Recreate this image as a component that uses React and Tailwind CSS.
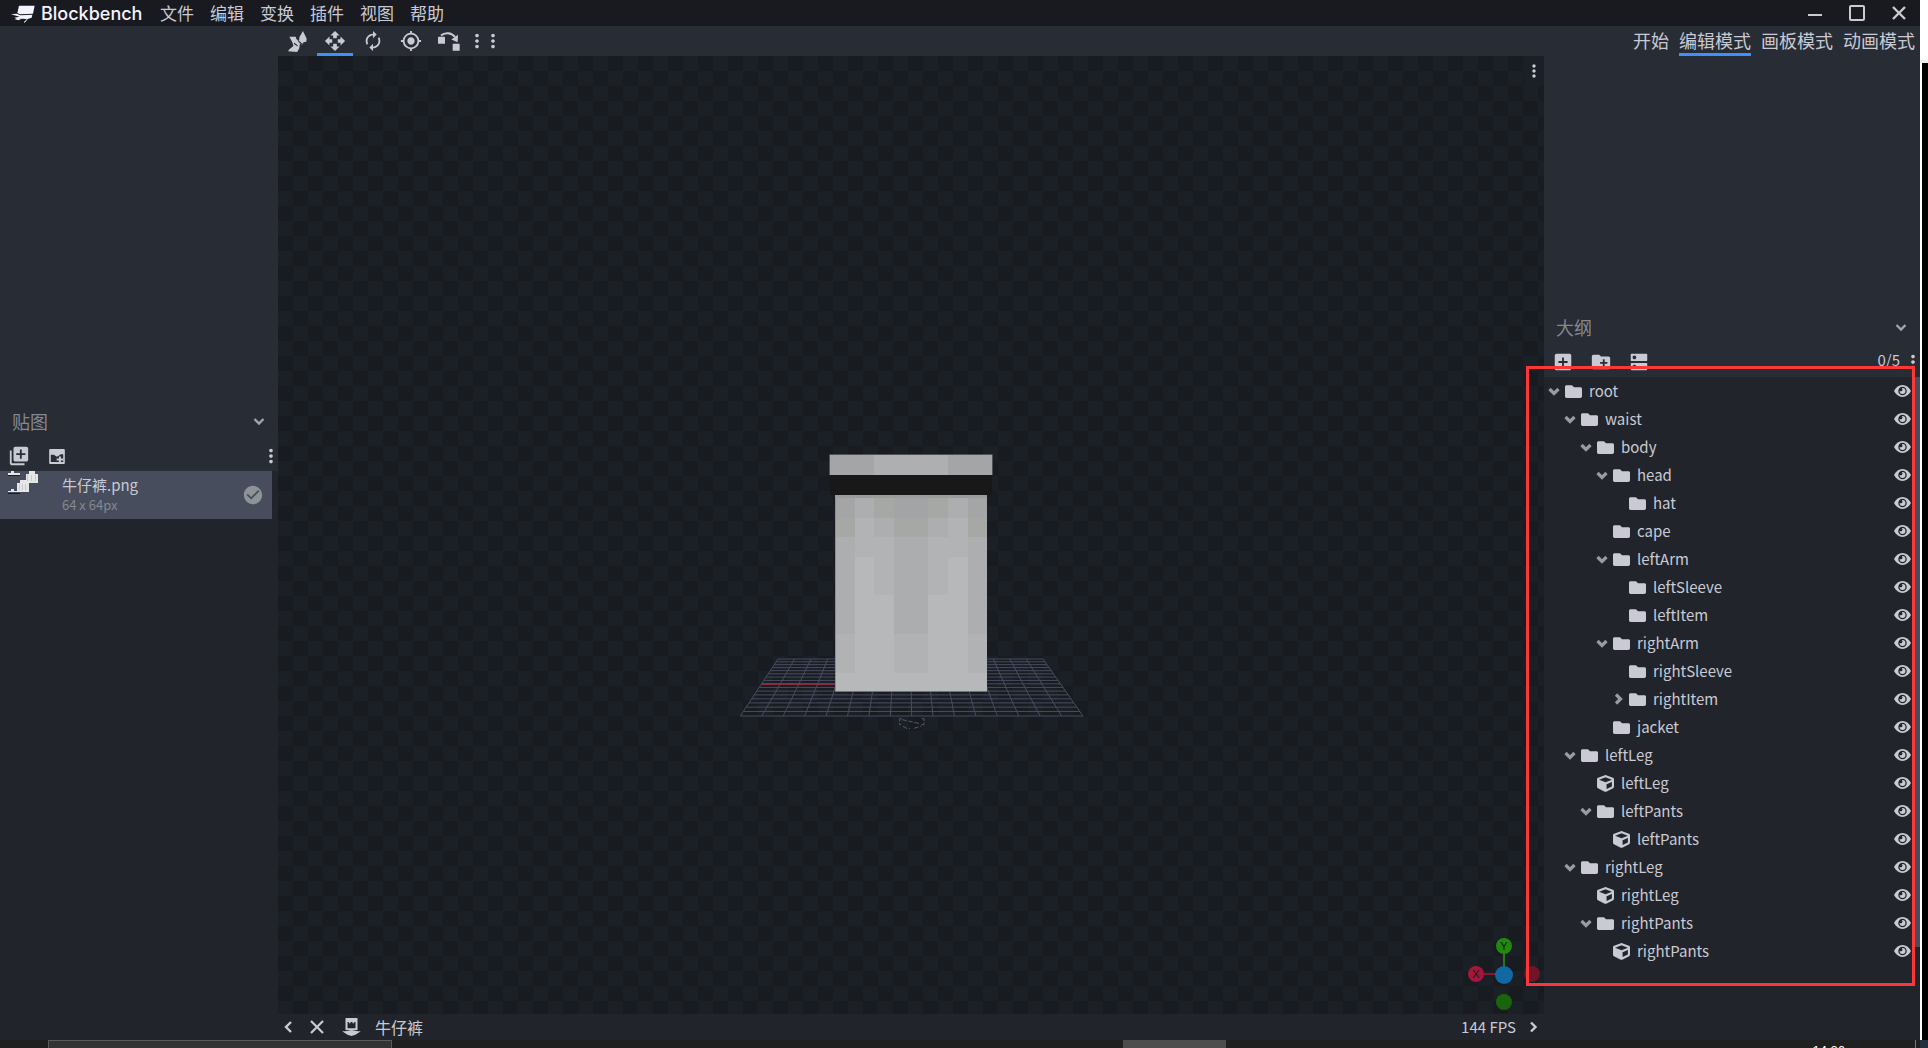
import React from "react";
import {
  MdAutorenew, MdMyLocation, MdMoreVert, MdLibraryAdd, MdCheckCircle, MdAddBox,
  MdCreateNewFolder, MdDns, MdOpenWith,
} from "react-icons/md";
import { FaFolder, FaCube } from "react-icons/fa";

const menus = ["文件", "编辑", "变换", "插件", "视图", "帮助"];
const modes = ["开始", "编辑模式", "画板模式", "动画模式"];

// [name, depth, kind, arrow]
const nodes = [
  ["root", 0, "folder", "down"],
  ["waist", 1, "folder", "down"],
  ["body", 2, "folder", "down"],
  ["head", 3, "folder", "down"],
  ["hat", 4, "folder", ""],
  ["cape", 3, "folder", ""],
  ["leftArm", 3, "folder", "down"],
  ["leftSleeve", 4, "folder", ""],
  ["leftItem", 4, "folder", ""],
  ["rightArm", 3, "folder", "down"],
  ["rightSleeve", 4, "folder", ""],
  ["rightItem", 4, "folder", "right"],
  ["jacket", 3, "folder", ""],
  ["leftLeg", 1, "folder", "down"],
  ["leftLeg", 2, "cube", ""],
  ["leftPants", 2, "folder", "down"],
  ["leftPants", 3, "cube", ""],
  ["rightLeg", 1, "folder", "down"],
  ["rightLeg", 2, "cube", ""],
  ["rightPants", 2, "folder", "down"],
  ["rightPants", 3, "cube", ""],
];

const indents = ["pl-0", "pl-4", "pl-8", "pl-12", "pl-16"];

function Chevron({ dir = "down", className = "", weight = 2.4 }) {
  const d = {
    down: "M1.5 4 L6 8.5 L10.5 4",
    right: "M4 1.5 L8.5 6 L4 10.5",
    left: "M8 1 L3 6 L8 11",
  }[dir];
  return (
    <svg viewBox="0 0 12 12" className={"size-3 shrink-0 " + className} fill="none" stroke="currentColor" strokeWidth={weight} aria-hidden="true">
      <path d={d} />
    </svg>
  );
}

function EyeIcon() {
  return (
    <svg viewBox="0 0 52 36" className="h-3 w-[17px]" fill="currentColor" aria-hidden="true">
      <path fillRule="evenodd" d="M0 18 C6 7 15 0 26 0 C37 0 46 7 52 18 C46 29 37 36 26 36 C15 36 6 29 0 18 Z M26 5 A13 13 0 1 0 26 31 A13 13 0 1 0 26 5 Z" />
      <path d="M26 9 A9 9 0 1 1 17 18 Q22 20 25 17 Q27 13 24 9 Z" />
    </svg>
  );
}

function Logo() {
  return (
    <svg viewBox="0 0 72 54" className="h-[18px] w-6" fill="#f4f3ff" aria-hidden="true">
      <path d="M24 2 L71 2 L66 26 L27 28 L19 24 Z" />
      <path d="M0 28 L17 26 L28 31 L64 29 L62 38 L50 42 L46 48 L39 54 L39 50 L48 43 L36 41 L17 42 L10 38 L26 35 Z" />
      <path d="M10 42 L32 41 L22 46 Z" />
    </svg>
  );
}

function VertexSnapIcon() {
  return (
    <svg viewBox="0 0 56 62" className="h-[21px] w-[19px]" fill="currentColor" aria-hidden="true">
      <path d="M4 17 L22 17 L30 26 L36 32 L33 52 L29 58 L27 62 L0 60 L4 54 L16 44 L13 34 Z" />
      <path d="M44 0 L55 22 L54 32 L46 33 L40 42 L32 32 L34 18 Z" />
      <path d="M24 20 L32 28 M31 30 L42 40 M18 36 L28 44" stroke="#282c34" strokeWidth="3.5" fill="none" />
    </svg>
  );
}

function SnapIcon() {
  return (
    <svg viewBox="0 0 66 56" className="h-[19px] w-[22px]" fill="currentColor" aria-hidden="true">
      <rect x="0" y="14" width="21" height="21" rx="2" />
      <rect x="44" y="35" width="21" height="21" rx="2" />
      <path d="M9 10 C20 0 40 0 51 14" stroke="currentColor" strokeWidth="6" fill="none" />
      <path d="M60 8 L59 30 L40 22 Z" />
    </svg>
  );
}

function NewTextureIcon() {
  return (
    <svg viewBox="0 0 48 46" className="h-[15px] w-4" fill="currentColor" aria-hidden="true">
      <path fillRule="evenodd" d="M3 0 H45 Q48 0 48 3 V43 Q48 46 45 46 H3 Q0 46 0 43 V3 Q0 0 3 0 Z M5 18 V40 H43 V16 L36 16 L24 24 L14 18 Z" />
      <path d="M30 23 h6 v6 h7 v6 h-7 v7 h-6 v-7 h-7 v-6 h7 Z" />
    </svg>
  );
}

function TextureThumb() {
  return (
    <svg viewBox="0 0 90 70" className="h-[23px] w-[30px]" shapeRendering="crispEdges" aria-hidden="true">
      <g fill="#e6e6e6">
        <rect x="63" y="0" width="18" height="10" /><rect x="54" y="9" width="36" height="27" />
        <rect x="36" y="28" width="18" height="9" /><rect x="27" y="36" width="36" height="27" />
        <rect x="9" y="0" width="9" height="9" /><rect x="9" y="54" width="9" height="9" />
        <rect x="0" y="7" width="36" height="4" /><rect x="0" y="61" width="36" height="4" />
      </g>
      <path d="M0 13 H36 M0 67 H36" stroke="#181a1f" strokeWidth="3" />
      <path d="M60 12 V30 M72 12 V30 M82 12 V30 M33 39 V58 M44 39 V58 M54 39 V58" stroke="#c9cacc" strokeWidth="3" />
    </svg>
  );
}

function FileIcon() {
  return (
    <svg viewBox="0 0 56 54" className="h-[18px] w-[19px]" fill="currentColor" aria-hidden="true">
      <path fillRule="evenodd" d="M10 0 H46 V36 H10 Z M16 12 V31 H40 V12 H36 V16 H31 V12 H25 V16 H20 V12 Z" />
      <path d="M0 40 H8 L28 36 L48 40 H56 L40 50 L28 54 L16 50 Z" />
    </svg>
  );
}

const xs = [345, 405, 462, 522, 624, 684, 743, 801];
const outer = [[204, "#a4a5a6"], [264, "#a6a8a5"], [321, "#adaeaf"], [612, "#b1b2b3"], [729, "#b7b8b9"]];
const second = [[204, "#adaeaf"], [264, "#b2b3b4"], [381, "#b7b8b9"]];
const third = [[204, "#a6a8a5"], [264, "#adaeaf"], [321, "#b2b3b4"], [495, "#b7b8b9"]];
const middle = [[204, "#a3a4a5"], [264, "#a6a8a5"], [321, "#acadae"], [612, "#b1b2b3"], [729, "#b7b8b9"]];
const columns = [outer, second, third, middle, third, second, outer];

function Model() {
  const lines = [];
  for (let i = 0; i <= 16; i++) {
    const t = i / 16;
    const w = 1 / ((1 - t) / 795 + t / 1028);
    const f = (w - 795) / 233;
    const y = 687 + 171 * f;
    lines.push(<path key={"h" + i} d={`M${174 - 113 * f} ${y} H${969 + 120 * f}`} />);
    lines.push(<path key={"v" + i} d={`M${174 + 795 * t} 687 L${61 + 1028 * t} 858`} />);
  }
  return (
    <svg viewBox="0 0 1146 930" className="h-[310px] w-[382px]" role="img" aria-label="牛仔裤">
      <g stroke="#474d62" strokeWidth="3" fill="none">{lines}</g>
      <path d="M125 762 H348" stroke="#a62c40" strokeWidth="5" />
      <rect x="345" y="195" width="456" height="590" fill="#8d8e8f" />
      <rect x="345" y="195" width="456" height="9" fill="#9c9c9b" />
      <g shapeRendering="crispEdges">
        {columns.map((col, c) =>
          col.map(([y, fill], r) => (
            <rect key={c + "-" + r} x={xs[c] + (c === 0 ? 2 : 0)} y={y} width={xs[c + 1] - xs[c] - (c === 0 ? 2 : 0)} height={783 - y} fill={fill} />
          ))
        )}
      </g>
      <rect x="330" y="135" width="486" height="60" fill="#181818" />
      <rect x="328" y="73" width="490" height="62" fill="#6c6c6e" />
      <rect x="330" y="75" width="486" height="60" fill="#a4a5a6" />
      <rect x="462" y="75" width="222" height="60" fill="#aeafb0" />
      <path d="M545 866 H539 V884 H543 M605 866 H612 V884 H602 M546 869 L600 881 M549 889 L560 895 H570 M582 895 L604 888" stroke="#565a69" strokeWidth="3" strokeDasharray="14 5" fill="none" />
    </svg>
  );
}

function AxisGizmo() {
  return (
    <svg viewBox="0 0 80 80" className="absolute right-0 bottom-0 size-20" aria-hidden="true">
      <path d="M40 12 V40" stroke="#257a18" strokeWidth="2" />
      <path d="M12 40 H40" stroke="#86192f" strokeWidth="2" />
      <circle cx="68" cy="40" r="8" fill="#701426" />
      <circle cx="40" cy="68" r="8" fill="#1a640e" />
      <circle cx="40" cy="12" r="8" fill="#22890f" />
      <circle cx="12" cy="40" r="8" fill="#a3173a" />
      <circle cx="40" cy="41" r="9" fill="#1268a3" />
      <g fontSize="11" textAnchor="middle" fill="#14171c" fontFamily="Liberation Sans, sans-serif">
        <text x="40" y="16">Y</text>
        <text x="12" y="44">X</text>
      </g>
    </svg>
  );
}

function TitleBar() {
  return (
    <header className="flex h-[26px] shrink-0 items-center bg-[#181a1f]">
      <div className="flex w-[152px] items-center gap-[6px] pt-0.5 pl-[11px]">
        <Logo />
        <span className="font-[Inter,sans-serif] text-[18px] leading-6 font-medium text-[#f4f3ff]">Blockbench</span>
      </div>
      <nav className="flex">
        {menus.map((m) => (
          <button key={m} className="px-2 text-[17px] leading-[26px]">{m}</button>
        ))}
      </nav>
      <div className="ml-auto flex items-center">
        <button aria-label="最小化" className="grid h-[26px] w-[42px] place-items-center">
          <svg viewBox="0 0 14 14" className="size-3.5" stroke="currentColor" strokeWidth="2"><path d="M0 9 H14" /></svg>
        </button>
        <button aria-label="最大化" className="grid h-[26px] w-[42px] place-items-center">
          <svg viewBox="0 0 16 16" className="size-4" fill="none" stroke="currentColor" strokeWidth="2"><rect x="1" y="1" width="14" height="14" rx="1" /></svg>
        </button>
        <button aria-label="关闭" className="grid h-[26px] w-[42px] place-items-center">
          <svg viewBox="0 0 14 14" className="size-3.5" stroke="currentColor" strokeWidth="2.4"><path d="M1 1 L13 13 M13 1 L1 13" /></svg>
        </button>
      </div>
    </header>
  );
}

function ToolBar() {
  const tool = "grid h-[30px] w-9 place-items-center border-y-[3px] border-transparent";
  return (
    <div className="flex h-[30px] shrink-0 items-center">
      <div className="flex flex-1 items-center gap-0.5 pl-[279px]">
        <button aria-label="顶点吸附" className={tool}><VertexSnapIcon /></button>
        <button aria-label="移动" className="grid h-[30px] w-9 place-items-center border-y-[3px] border-t-transparent border-b-[#3e90ff]"><MdOpenWith className="size-[22px]" /></button>
        <button aria-label="旋转" className={tool}><MdAutorenew className="size-[22px]" /></button>
        <button aria-label="枢轴" className={tool}><MdMyLocation className="size-[22px]" /></button>
        <button aria-label="吸附" className={tool}><SnapIcon /></button>
        <div className="flex">
          <button aria-label="更多" className="flex w-4 justify-center"><MdMoreVert className="size-[22px] shrink-0" /></button>
          <button aria-label="更多选项" className="flex w-4 justify-center"><MdMoreVert className="size-[22px] shrink-0" /></button>
        </div>
      </div>
      <nav className="flex">
        {modes.map((m) => (
          <button
            key={m}
            className={
              "mx-[5px] h-[30px] border-b-[3px] text-[18px] leading-7 " +
              (m === "编辑模式" ? "border-[#3e90ff]" : "border-transparent")
            }
          >
            {m}
          </button>
        ))}
      </nav>
    </div>
  );
}

function TexturePanel() {
  return (
    <aside className="flex w-[278px] shrink-0 flex-col">
      <div className="h-[345px] shrink-0" />
      <section className="flex flex-1 flex-col">
        <h2 className="flex h-10 shrink-0 items-center justify-between pr-[13px] pl-3 text-[18px] text-[#848891]">
          贴图<Chevron className="text-[#a3a4ad]" />
        </h2>
        <div className="flex h-[30px] shrink-0 items-center pl-2">
          <button aria-label="导入贴图" className="mr-[19px]"><MdLibraryAdd className="size-[22px]" /></button>
          <button aria-label="创建贴图"><NewTextureIcon /></button>
          <button aria-label="更多" className="-mr-1 ml-auto"><MdMoreVert className="size-[22px]" /></button>
        </div>
        <div className="flex-1 bg-[#21252b]">
          <div className="mr-1.5 flex h-12 items-center bg-[#474d5d]">
            <div className="w-[62px] self-start pl-2"><TextureThumb /></div>
            <div className="flex-1 pb-1">
              <div className="text-[15px] leading-6">牛仔裤.png</div>
              <div className="text-[13px] leading-4 text-[#848891]">64 x 64px</div>
            </div>
            <MdCheckCircle className="mr-2 size-[22px] text-[#8f9398]" />
          </div>
        </div>
      </section>
    </aside>
  );
}

function Viewport() {
  return (
    <main className="flex min-w-0 flex-1 flex-col">
      <div className="relative flex flex-1 items-center justify-center bg-[#1b1f26] bg-[conic-gradient(#1b1f26_25%,#181b1f_0_50%,#1b1f26_0_75%,#181b1f_0)] bg-[size:30px_30px] pt-[100px]">
        <Model />
        <button aria-label="视图选项" className="absolute top-0 right-0 grid h-[30px] w-5 place-items-center bg-[#1b1f26]">
          <MdMoreVert className="size-5" />
        </button>
        <AxisGizmo />
      </div>
      <footer className="flex h-[26px] shrink-0 items-center bg-[#21252b] pr-[5px] pl-[5px]">
        <button aria-label="收起左栏" className="mr-[15px]"><Chevron dir="left" /></button>
        <button aria-label="关闭项目" className="mr-[18px]">
          <svg viewBox="0 0 14 14" className="size-3.5" stroke="currentColor" strokeWidth="2.2"><path d="M1 1 L13 13 M13 1 L1 13" /></svg>
        </button>
        <FileIcon />
        <span className="ml-3.5 text-[16px] leading-6">牛仔裤</span>
        <span className="mr-[11px] ml-auto text-[15px] leading-6">144 FPS</span>
        <button aria-label="收起右栏"><Chevron dir="right" /></button>
      </footer>
    </main>
  );
}

function Outliner() {
  return (
    <aside className="relative flex w-[376px] shrink-0 flex-col">
      <div className="h-[251px] shrink-0" />
      <h2 className="flex h-10 shrink-0 items-center justify-between pr-[13px] pl-3 text-[18px] text-[#848891]">
        大纲<Chevron className="text-[#a3a4ad]" />
      </h2>
      <div className="flex h-[30px] shrink-0 items-center gap-4 pl-2">
        <button aria-label="添加方块"><MdAddBox className="size-[22px]" /></button>
        <button aria-label="添加组"><MdCreateNewFolder className="size-[22px]" /></button>
        <button aria-label="切换选项"><MdDns className="size-[22px]" /></button>
        <span className="ml-auto pb-1 text-[15px] leading-6">0/5</span>
        <button aria-label="更多" className="-mr-1 -ml-3.5"><MdMoreVert className="size-[22px]" /></button>
      </div>
      <div className="flex flex-1 bg-[#21252b]">
        <ul className="flex-1">
          {nodes.map(([name, depth, kind, arrow], i) => (
            <li key={i} className={"flex h-7 items-center " + indents[depth]}>
              <span className="flex w-[21px] items-center pl-1">
                {arrow && <Chevron dir={arrow} weight={3.2} className="text-[#9a9ba5]" />}
              </span>
              {kind === "folder" ? <FaFolder className="size-[17px]" /> : <FaCube className="size-[17px]" />}
              <span className="ml-[7px] text-[15px] leading-7">{name}</span>
              <button aria-label={"显示 " + name} className="mr-1 ml-auto"><EyeIcon /></button>
            </li>
          ))}
        </ul>
        <div className="h-[570px] w-[5px] bg-[#474d5d]" />
      </div>
      <div className="pointer-events-none absolute top-[310px] right-[5px] -left-[18px] h-[620px] border-[3px] border-[#fd3637]" />
    </aside>
  );
}

export default function App() {
  return (
    <div className="flex h-screen flex-col overflow-hidden bg-[#202020] font-['Noto_Sans_CJK_SC',sans-serif] text-[#cacad4]">
      <div className="flex min-h-0 flex-1">
        <div className="flex min-w-0 flex-1 flex-col bg-[#282c34]">
          <TitleBar />
          <ToolBar />
          <div className="flex min-h-0 flex-1">
            <TexturePanel />
            <Viewport />
            <Outliner />
          </div>
        </div>
        <div className="flex w-2 flex-col bg-white">
          <div className="h-[63px] border-b-[3px] border-[#ececec]" />
          <div className="ml-0.5 flex-1 bg-black" />
        </div>
      </div>
      <div className="flex h-2 shrink-0 overflow-hidden">
        <div className="ml-12 w-[344px] border border-b-0 border-[#5c5c5c] bg-[#333333]" />
        <div className="ml-[731px] w-[103px] bg-[#4d4d4d]" />
        <div className="mr-[70px] ml-auto pt-[3px] font-['Liberation_Sans',sans-serif] text-[13px] leading-4 text-white">14:26</div>
        <div className="w-[5px] border-l border-[#777]" />
        <div className="w-2 bg-[#22303f]" />
      </div>
    </div>
  );
}
